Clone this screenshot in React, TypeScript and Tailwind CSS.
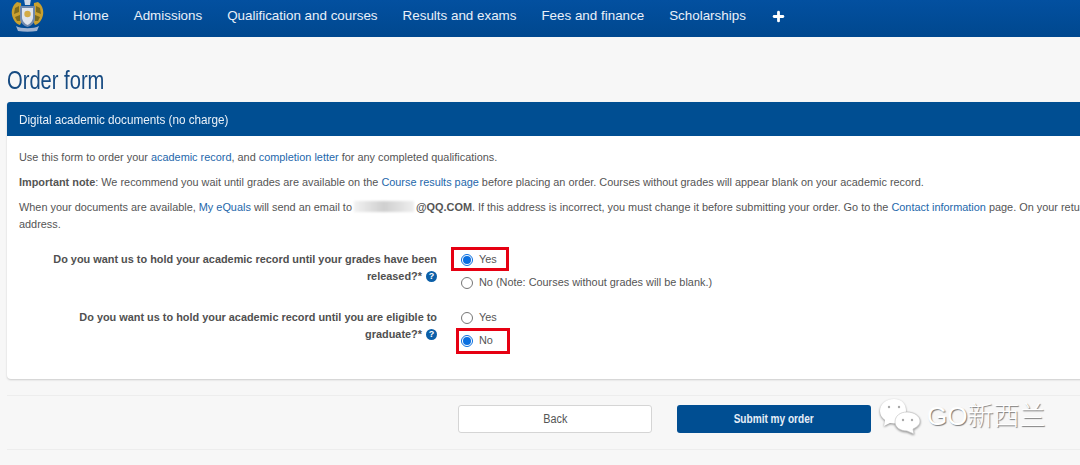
import type { ReactNode } from "react";
import { Plus } from "lucide-react";

const navItems = ["Home", "Admissions", "Qualification and courses", "Results and exams", "Fees and finance", "Scholarships"];

function Crest() {
  return (
    <svg width="33" height="33" viewBox="0 0 33 33">
      {/* gold supporters either side of the shield */}
      <path d="M6 3 C2 6 0 11 1 16 C2 21 5 25 9 26 L11 22 L10 4 Z" fill="#c9a02f" />
      <path d="M27 3 C31 6 33 11 32 16 C31 21 28 25 24 26 L22 22 L23 4 Z" fill="#c9a02f" />
      <path d="M4 9 L8 7 L8 13 L3 15 Z M4 18 L9 16 L9 22 L6 22 Z" fill="#7d6a1e" />
      <path d="M29 9 L25 7 L25 13 L30 15 Z M29 18 L24 16 L24 22 L27 22 Z" fill="#7d6a1e" />
      <path d="M13 0 H20 L19 6 H14 Z" fill="#cfd8e6" />
      <path d="M9 7 H24 V19 C24 24 20 27 16.5 28 C13 27 9 24 9 19 Z" fill="#6f88ad" />
      <path d="M11 9 H22 V18 C22 22 19 25 16.5 26 C14 25 11 22 11 18 Z" fill="#dfe4ec" />
      <circle cx="16.5" cy="15" r="3.2" fill="#d4ab45" />
      <path d="M5 27 C10 30 23 30 28 27 L26 32 C20 33 13 33 7 32 Z" fill="#9fb3d0" />
    </svg>
  );
}

function HelpIcon() {
  return (
    <span className="relative -top-[1px] inline-flex w-[11px] h-[11px] ml-[1px] items-center justify-center rounded-full bg-[#0b5fa8] text-white text-[9px] font-bold leading-none align-middle">
      ?
    </span>
  );
}

function Radio({ checked }: { checked?: boolean }) {
  return (
    <span className={`flex w-[12px] h-[12px] shrink-0 items-center justify-center rounded-full border bg-white ${checked ? "border-[#0a6fe0]" : "border-[#767676]"}`}>
      {checked && <span className="block w-[8px] h-[8px] rounded-full bg-[#0a6fe0]" />}
    </span>
  );
}

function Option({ checked, label }: { checked?: boolean; label: string }) {
  return (
    <div className="flex items-center gap-[6px] h-[23px] text-[10.9px] text-[#555]">
      <Radio checked={checked} />
      <span>{label}</span>
    </div>
  );
}

function Highlight({ box, children }: { box: string; children: ReactNode }) {
  return (
    <div className="relative">
      {children}
      <div className={`absolute border-[3px] border-[#e60012] ${box}`} />
    </div>
  );
}

function Question({ line1, line2 }: { line1: string; line2: string }) {
  return (
    <div className="w-[430px] text-right text-[10.9px] font-bold leading-[17px] text-[#505050]">
      <div>{line1}</div>
      <div>
        {line2} <HelpIcon />
      </div>
    </div>
  );
}

export default function App() {
  return (
    <div className="relative w-[1080px] h-[465px] overflow-hidden bg-[#f7f7f7] font-['Liberation_Sans',Arial,sans-serif]">
      <header className="flex h-[37px] bg-gradient-to-b from-[#0350a0] to-[#00488f]">
        <div className="ml-[11px] w-[62px] -mt-[1px]">
          <Crest />
        </div>
        <nav className="flex items-center gap-[25px] h-[32px] text-[13.4px] text-[#e9f0f9]">
          {navItems.map((item) => (
            <span key={item}>{item}</span>
          ))}
          <Plus size={15} strokeWidth={4.5} className="text-white" />
        </nav>
      </header>

      <main className="pl-[7px]">
        <h1 className="pt-[29px] h-[65px] text-[25.5px] leading-[28px] text-[#174b82] origin-left scale-x-[0.79] whitespace-nowrap">Order form</h1>

        <section className="w-[1100px] h-[277px] bg-white rounded-t-[3px] rounded-b-[4px] shadow-[0_1px_2px_rgba(0,0,0,0.18)]">
          <div className="flex items-center h-[34px] pl-[12px] pt-[1px] bg-[#004e92] rounded-t-[3px] text-[#eaf1f8]">
            <span className="text-[13px] origin-left scale-x-90 whitespace-nowrap">Digital academic documents (no charge)</span>
          </div>
          <div className="pt-[14px] pl-[12px] text-[10.9px] leading-[15px] text-[#555] whitespace-nowrap">
            <p>
              Use this form to order your <a className="text-[#2467ab]">academic record</a>, and <a className="text-[#2467ab]">completion letter</a> for any completed qualifications.
            </p>
            <p className="mt-[10px]">
              <b>Important note</b>: We recommend you wait until grades are available on the <a className="text-[#2467ab]">Course results page</a> before placing an order. Courses without grades will appear blank on your academic record.
            </p>
            <p className="mt-[9px] leading-[17px]">
              When your documents are available, <a className="text-[#2467ab]">My eQuals</a> will send an email to
              <span className="inline-block w-[60px] h-[11px] mx-[2px] align-[-1px] bg-gradient-to-r from-[#f2f2f2] via-[#cfcfcf] to-[#efefef] blur-[1px]" />
              <b>@QQ.COM</b>. If this address is incorrect, you must change it before submitting your order. Go to the <a className="text-[#2467ab]">Contact information</a> page. On your return
              <br />
              address.
            </p>
          </div>

          <div className="mt-[18px] flex gap-[24px]">
            <Question line1="Do you want us to hold your academic record until your grades have been" line2="released?*" />
            <div className="-mt-[3px]">
              <Highlight box="left-[-10px] top-[-1px] w-[58px] h-[24px]">
                <Option checked label="Yes" />
              </Highlight>
              <Option label="No (Note: Courses without grades will be blank.)" />
            </div>
          </div>
          <div className="mt-[15px] flex gap-[24px]">
            <Question line1="Do you want us to hold your academic record until you are eligible to" line2="graduate?*" />
            <div className="-mt-[3px]">
              <Option label="Yes" />
              <Highlight box="left-[-5px] top-[-1px] w-[54px] h-[26px]">
                <Option checked label="No" />
              </Highlight>
            </div>
          </div>
        </section>

        <div className="mt-[16px] w-[1100px] h-[55px] flex items-start gap-[25px] pt-[9px] pl-[451px] border-y border-[#ededed]">
          <button className="w-[194px] h-[28px] bg-white border border-[#d5d5d5] rounded-[3px] text-[#555]">
            <span className="inline-block text-[12px] scale-x-90 -translate-y-[1px]">Back</span>
          </button>
          <button className="w-[194px] h-[28px] bg-[#004e92] rounded-[3px] font-bold text-[#e6eef8]">
            <span className="inline-block text-[12px] scale-x-[0.84] -translate-y-[1px] whitespace-nowrap">Submit my order</span>
          </button>
        </div>
      </main>

      {/* watermark sits over the footer */}
      <div className="absolute left-[879px] top-[398px] flex items-center gap-[6px]">
        <svg width="42" height="36" viewBox="0 0 42 36" className="drop-shadow-[0_1px_1px_rgba(0,0,0,0.45)]">
          <path d="M15 1 C7 1 1 6 1 13 C1 17 3 20 6 22 L5 28 L11 25 C13 25 15 26 17 25 C22 25 27 19 27 13 C27 6 23 1 15 1 Z" fill="#ffffff" />
          <path d="M28 14 C21 14 16 18 16 24 C16 29 21 33 28 33 L35 36 L34 31 C38 29 41 27 41 23 C41 18 35 14 28 14 Z" fill="#ffffff" stroke="#c4c4c4" strokeWidth="0.7" />
          <g fill="#a8a8a8">
            <circle cx="10" cy="9" r="1.2" />
            <circle cx="20" cy="9" r="1.2" />
            <circle cx="24" cy="22" r="1.2" />
            <circle cx="33" cy="22" r="1.2" />
          </g>
        </svg>
        <span className="text-[26px] leading-none font-['Liberation_Sans','Noto_Sans_CJK_SC',sans-serif] font-light text-white [text-shadow:1px_1px_1px_#7a7a7a]">GO新西兰</span>
      </div>
    </div>
  );
}
